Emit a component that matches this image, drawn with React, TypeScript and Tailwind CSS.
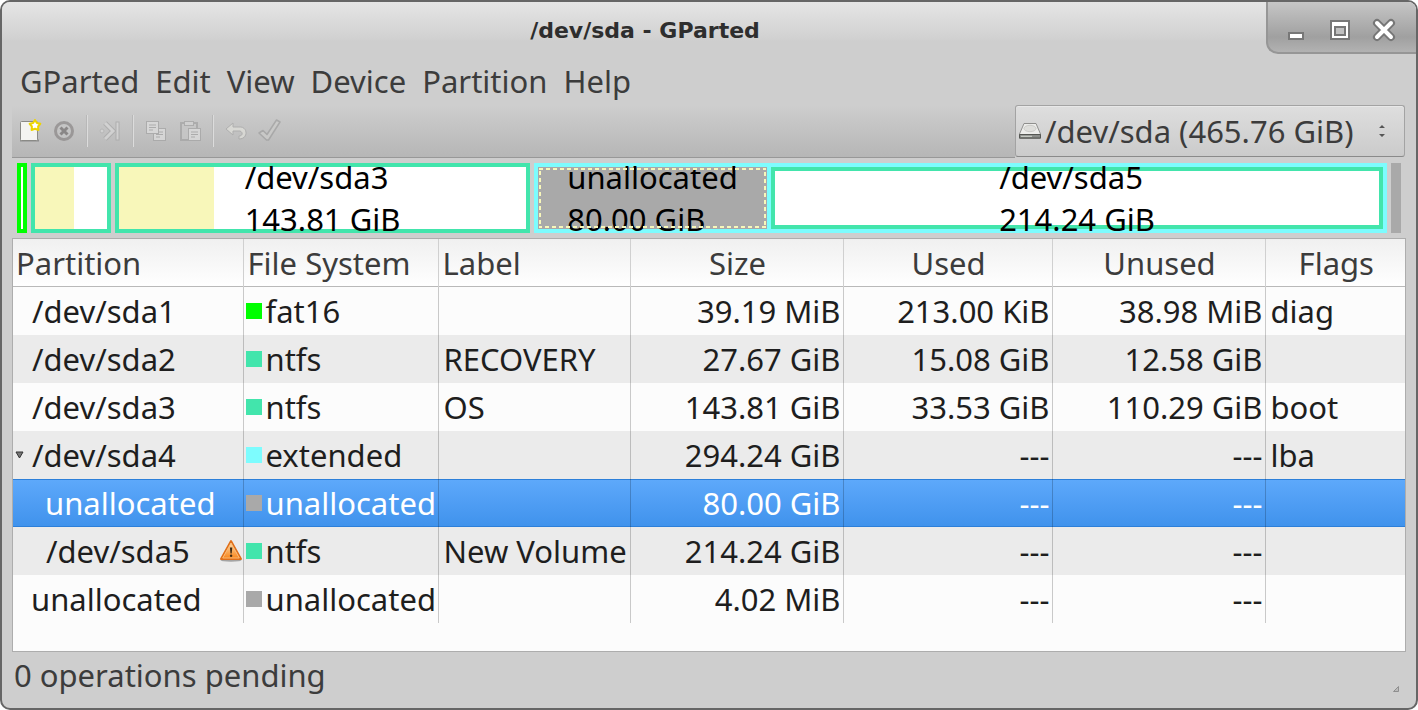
import type { ReactNode } from "react";

type Row = {
  name: string;
  fs: string;
  color: string;
  label?: string;
  size: string;
  used: string;
  unused: string;
  flags?: string;
  indent: string;
  open?: boolean;
  warn?: boolean;
  selected?: boolean;
};

const rows: Row[] = [
  { name: "/dev/sda1", fs: "fat16", color: "bg-[#00ff00]", size: "39.19 MiB", used: "213.00 KiB", unused: "38.98 MiB", flags: "diag", indent: "pl-[19px]" },
  { name: "/dev/sda2", fs: "ntfs", color: "bg-[#42e5ac]", label: "RECOVERY", size: "27.67 GiB", used: "15.08 GiB", unused: "12.58 GiB", indent: "pl-[19px]" },
  { name: "/dev/sda3", fs: "ntfs", color: "bg-[#42e5ac]", label: "OS", size: "143.81 GiB", used: "33.53 GiB", unused: "110.29 GiB", flags: "boot", indent: "pl-[19px]" },
  { name: "/dev/sda4", fs: "extended", color: "bg-[#7dfcfe]", size: "294.24 GiB", used: "---", unused: "---", flags: "lba", indent: "pl-[2px]", open: true },
  { name: "unallocated", fs: "unallocated", color: "bg-[#a9a9a9]", size: "80.00 GiB", used: "---", unused: "---", indent: "pl-[32px]", selected: true },
  { name: "/dev/sda5", fs: "ntfs", color: "bg-[#42e5ac]", label: "New Volume", size: "214.24 GiB", used: "---", unused: "---", indent: "pl-[33px]", warn: true },
  { name: "unallocated", fs: "unallocated", color: "bg-[#a9a9a9]", size: "4.02 MiB", used: "---", unused: "---", indent: "pl-[18px]" },
];

const columns = [
  { title: "Partition", width: "w-[230px]", align: "text-left" },
  { title: "File System", width: "w-[195px]", align: "text-left" },
  { title: "Label", width: "w-[192px]", align: "text-left" },
  { title: "Size", width: "w-[213px]", align: "text-center" },
  { title: "Used", width: "w-[209px]", align: "text-center" },
  { title: "Unused", width: "w-[213px]", align: "text-center" },
  { title: "Flags", width: "", align: "text-center" },
];

function Warning() {
  return (
    <svg width="24" height="24" viewBox="0 0 24 24" role="img" aria-label="Warning" className="shrink-0">
      <defs>
        <linearGradient id="warn" x1="0" y1="0" x2="0" y2="1">
          <stop offset="0" stopColor="#fdd9a5" />
          <stop offset="1" stopColor="#f8871f" />
        </linearGradient>
      </defs>
      <ellipse cx="12" cy="21.5" rx="10.5" ry="1.2" fill="#000" opacity="0.3" />
      <path d="M12 2 L22 20 H2 Z" fill="#fff" stroke="#e0701a" strokeWidth="2" strokeLinejoin="round" />
      <path d="M12 4 L20.3 19 H3.7 Z" fill="url(#warn)" stroke="#fbb872" strokeWidth="1" strokeLinejoin="round" />
      <path d="M10.9 8.5 h2.4 l-0.6 6 h-1.2 Z" fill="#3d2a14" />
      <circle cx="12.1" cy="16.7" r="1.2" fill="#3d2a14" />
    </svg>
  );
}

function ToolButton({ label, disabled, children }: { label: string; disabled?: boolean; children: ReactNode }) {
  return (
    <button type="button" aria-label={label} disabled={disabled} className="flex h-8 w-[34px] items-center justify-center disabled:opacity-65">
      <svg width="24" height="24" viewBox="0 0 24 24" fill="none">
        {children}
      </svg>
    </button>
  );
}

function Separator() {
  return <div className="mx-[5px] h-8 w-[2px] border-l border-[#b8b8b8] bg-[#dcdcdc]" />;
}

function BarText({ name, size }: { name: string; size: string }) {
  return (
    <div className="flex h-full items-center justify-center text-[31px] leading-[42px] whitespace-nowrap text-black [grid-area:1/1]">
      <div className="-my-4">
        <div>{name}</div>
        <div>{size}</div>
      </div>
    </div>
  );
}

function Lines({ x, y }: { x: number; y: number }) {
  return (
    <g>
      <rect x={x} y={y} width="12" height="12" fill="#e2e2e2" stroke="#a0a0a0" />
      <path d={`M${x + 2.5} ${y + 3.5}h7M${x + 2.5} ${y + 6}h7M${x + 2.5} ${y + 8.5}h4`} stroke="#a0a0a0" />
    </g>
  );
}

export default function App() {
  return (
    <div className="bg-white">
      <div className="flex min-h-screen flex-col overflow-hidden rounded-[10px] border-2 border-[#666] bg-[#cecece] font-['Noto_Sans',sans-serif] text-[31px] leading-[42px] text-[#3c3c3c]">
        <header className="flex h-[52px] items-start bg-linear-to-b from-[#e5e5e5] via-[#d1d1d1] via-70% to-[#cecece] to-75%">
          <h1 className="flex-1 pt-[14px] pl-[22px] text-center font-['DejaVu_Sans',sans-serif] text-[22px] leading-[30px] font-bold text-[#2e2e2e]">
            /dev/sda - GParted
          </h1>
          <div className="flex h-[52px] w-[150px] items-center rounded-bl-[12px] border-b-2 border-l-2 border-[#969696] bg-linear-to-b from-[#c6c6c6] via-[#a0a0a0] via-70% to-[#b2b2b2] pl-4">
            {[
              <rect key="m" x="5" y="15" width="14" height="6" fill="#fff" stroke="#777" strokeWidth="2" />,
              <g key="x">
                <rect x="3" y="3" width="18" height="18" fill="#fff" stroke="#777" strokeWidth="2" />
                <rect x="7" y="9" width="10" height="8" fill="#c0c0c0" stroke="#777" strokeWidth="2" />
              </g>,
              <g key="c" strokeLinecap="round">
                <path d="M5 5 L19 19 M19 5 L5 19" stroke="#777" strokeWidth="8" />
                <path d="M5 5 L19 19 M19 5 L5 19" stroke="#fff" strokeWidth="4" />
              </g>,
            ].map((icon, i) => (
              <button key={i} type="button" aria-label={["Minimize", "Maximize", "Close"][i]} className="flex h-11 w-11 items-center pt-[6px]">
                <svg width="24" height="24" viewBox="0 0 24 24" className="overflow-visible">
                  {icon}
                </svg>
              </button>
            ))}
          </div>
        </header>

        <nav className="flex h-[51px] items-center gap-4 pt-[2px] pl-[18px]">
          {["GParted", "Edit", "View", "Device", "Partition", "Help"].map((item) => (
            <button key={item} type="button">
              {item}
            </button>
          ))}
        </nav>

        <div className="mr-[11px] ml-[10px] flex h-[53px] items-start">
          <div className="flex h-[53px] flex-1 items-center border-b border-[#989898] bg-linear-to-b from-[#cecece] to-[#b6b6b6] pl-px">
            <ToolButton label="New">
              <rect x="2" y="20.5" width="19" height="2" fill="#000" opacity="0.25" />
              <rect x="2.5" y="2.5" width="17" height="19" rx="1" fill="#f4f4f1" stroke="#8a8a86" />
              <path d="M17 1 l1.9 3 3.4 0.8 -2.2 2.7 0.3 3.5 -3.4 -1.2 -3.4 1.2 0.3 -3.5 -2.2 -2.7 3.4 -0.8 Z" fill="#fff" stroke="#edd400" strokeWidth="2" strokeLinejoin="round" />
            </ToolButton>
            <ToolButton label="Delete" disabled>
              <circle cx="12" cy="12" r="8.5" fill="#c6c6c6" stroke="#868282" strokeWidth="3" />
              <path d="M8.5 8.5 l7 7 M15.5 8.5 l-7 7" stroke="#6c6868" strokeWidth="3" />
            </ToolButton>
            <Separator />
            <ToolButton label="Resize/Move" disabled>
              <circle cx="4" cy="12" r="2" fill="#dadada" stroke="#b0b0b0" />
              <path d="M7 4 L15 12 L7 20" stroke="#a4a4a4" strokeWidth="5" />
              <path d="M7 4 L15 12 L7 20" stroke="#dadada" strokeWidth="3" />
              <rect x="18" y="3" width="3" height="18" fill="#dadada" stroke="#a4a4a4" />
            </ToolButton>
            <Separator />
            <ToolButton label="Copy" disabled>
              <Lines x={9.5} y={9.5} />
              <Lines x={2.5} y={2.5} />
            </ToolButton>
            <ToolButton label="Paste" disabled>
              <rect x="3" y="4" width="16" height="17" fill="#c8c8c8" stroke="#a0a0a0" strokeWidth="2" />
              <rect x="6.5" y="2.5" width="9" height="4" fill="#d6d6d6" stroke="#a0a0a0" />
              <Lines x={10.5} y={9.5} />
            </ToolButton>
            <Separator />
            <ToolButton label="Undo" disabled>
              <path d="M2 10 L9 4 V8 H17 C24 9 24 20 15 20 V17 C19 17 19 13 16 12 H9 V16 Z" fill="#e4e4de" stroke="#a4a4a4" />
            </ToolButton>
            <ToolButton label="Apply" disabled>
              <path d="M1 14 L5 11.5 L9 15.5 L18.5 1 L22 3 L10.5 21 H8.5 Z" fill="#cdcdcb" stroke="#9c9c9c" strokeWidth="1.5" strokeLinejoin="round" />
            </ToolButton>
          </div>
          <div className="grid h-[52px] w-[390px] items-center rounded-[3px] border border-[#a3a3a3] border-b-[#8a8a8a] bg-linear-to-b from-[#dedede] to-[#cbcbcb] shadow-[inset_0_1px_0_#e8e8e8]">
            <select aria-label="Device" className="h-full w-full appearance-none pl-[29px] [grid-area:1/1]">
              <option>/dev/sda (465.76 GiB)</option>
            </select>
            <svg width="24" height="18" viewBox="0 0 24 18" className="pointer-events-none ml-[2px] [grid-area:1/1]">
              <path d="M6 1.5 H18 L22.5 12 V16.5 H1.5 V12 Z" fill="#ededeb" stroke="#8f8f8d" />
              <path d="M1.5 12.5 H22.5 V16 H1.5 Z" fill="#8b8d8a" stroke="#555753" />
              <path d="M3 14.3 H14" stroke="#d3d7cf" />
              <ellipse cx="12" cy="6.5" rx="6" ry="3.2" fill="#dededb" stroke="#cbcbc8" />
            </svg>
            <svg width="8" height="14" viewBox="0 0 8 14" className="pointer-events-none mr-[18px] justify-self-end [grid-area:1/1]">
              <path d="M1 4 L4 1 L7 4 Z M1 10 L4 13 L7 10 Z" fill="#555" />
            </svg>
          </div>
        </div>

        <section aria-label="Disk layout" className="mx-[15px] mt-[5px] grid h-[70px] grid-cols-[10px_minmax(0,80fr)_minmax(0,415fr)_minmax(0,853fr)_10px] gap-1">
          <div className="border-4 border-[#00ff00] bg-white" />
          <div className="border-4 border-[#42e5ac] bg-white">
            <div className="h-full w-[54%] bg-[#f8f7ba]" />
          </div>
          <div className="grid grid-rows-[62px] border-4 border-[#42e5ac] bg-white">
            <div className="w-[23.4%] bg-[#f8f7ba] [grid-area:1/1]" />
            <BarText name="/dev/sda3" size="143.81 GiB" />
          </div>
          <div className="grid grid-cols-[minmax(0,229fr)_minmax(0,612fr)] gap-1 border-4 border-[#7dfcfe] bg-[#7dfcfe]">
            <div className="grid grid-rows-[62px] bg-[#a9a9a9]">
              <BarText name="unallocated" size="80.00 GiB" />
              <div className="p-px [grid-area:1/1]">
                <svg width="100%" height="60" className="block">
                  <rect x="0" y="0" width="100%" height="60" fill="none" stroke="#f8f7ba" strokeWidth="4" strokeDasharray="4 3" />
                </svg>
              </div>
            </div>
            <div className="grid grid-rows-[54px] border-4 border-[#42e5ac] bg-white">
              <BarText name="/dev/sda5" size="214.24 GiB" />
            </div>
          </div>
          <div className="bg-[#a9a9a9]" />
        </section>

        <main className="mx-[10px] mt-[5px] flex-1 border border-[#adadad] bg-[#fcfcfc]">
          <table className="w-full table-fixed border-collapse text-[#1e1e1e]">
            <thead>
              <tr className="h-12 bg-linear-to-b from-[#f0f0f0] to-white text-[#3c3c3c] shadow-[inset_0_-1px_0_#b9b9b9]">
                {columns.map((c) => (
                  <th key={c.title} scope="col" className={`border-r border-[#d0d0d0] pr-[2px] pl-[4px] font-normal first:pl-[3px] last:border-r-0 ${c.width} ${c.align}`}>
                    {c.title}
                  </th>
                ))}
              </tr>
            </thead>
            <tbody>
              {rows.map((r, i) => (
                <tr
                  key={i}
                  className={`h-12 whitespace-nowrap *:border-r *:border-black/20 *:p-0 *:last:border-r-0 ${
                    r.selected
                      ? "bg-linear-to-b from-[#5ea9fb] to-[#3f92ec] text-white shadow-[inset_0_1px_0_#2c7fd9,inset_0_-1px_0_#2c7fd9]"
                      : i % 2
                        ? "bg-[#ebebeb]"
                        : "bg-[#fcfcfc]"
                  }`}
                >
                  <td>
                    <div className={`flex items-center ${r.indent}`}>
                      {r.open && (
                        <button type="button" aria-label="Collapse /dev/sda4" className="w-[17px] text-left">
                          <svg width="9" height="8" viewBox="0 0 9 8">
                            <path d="M1 1 H8 L4.5 7 Z" fill="#777" stroke="#333" />
                          </svg>
                        </button>
                      )}
                      <span className="flex-1">{r.name}</span>
                      {r.warn && <Warning />}
                    </div>
                  </td>
                  <td>
                    <div className="flex items-center gap-1 pl-[2px]">
                      <span className={`h-4 w-4 shrink-0 ${r.color}`} />
                      <span>{r.fs}</span>
                    </div>
                  </td>
                  <td>
                    <div className="pl-[5px]">{r.label}</div>
                  </td>
                  <td className="text-right">
                    <div className="pr-[2px]">{r.size}</div>
                  </td>
                  <td className="text-right">
                    <div className="pr-[2px]">{r.used}</div>
                  </td>
                  <td className="text-right">
                    <div className="pr-[2px]">{r.unused}</div>
                  </td>
                  <td>
                    <div className="pl-[5px]">{r.flags}</div>
                  </td>
                </tr>
              ))}
            </tbody>
          </table>
        </main>

        <footer className="flex h-14 items-start justify-between pt-[2px] pr-[17px] pl-3">
          <p>0 operations pending</p>
          <svg width="6" height="6" viewBox="0 0 6 6" className="mt-8">
            <path d="M0.5 5.5 L5.5 0.5 V5.5 Z" fill="#bbb" stroke="#8f8f8f" />
          </svg>
        </footer>
      </div>
    </div>
  );
}
